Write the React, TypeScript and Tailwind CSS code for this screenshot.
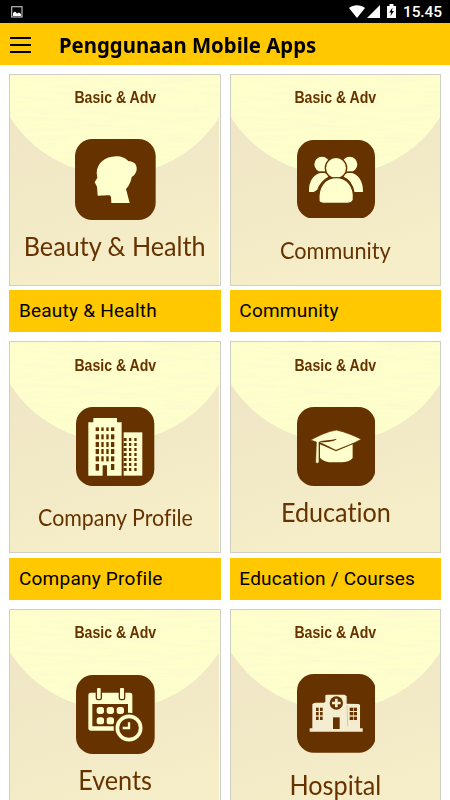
import type { ReactNode } from "react";

const CREAM = "#feffcd";
const BROWN = "#663300";

const BeautyIcon = () => (
  <svg viewBox="16 10 242 243" className="w-[80.7px] h-[81px]">
    <rect x="16" y="10" width="242" height="243" rx="52" fill={BROWN} />
    <path
      fill={CREAM}
      d="M81 112C82 82 106 63 139 62C157 62 168 68 177 77C190 77 200 84 201 96C202 109 195 118 186 124C184 138 178 151 169 160L180 202H125L124 185C123 180 120 179 115 179L84 180L82 153L75 140L83 126Z"
    />
  </svg>
);

const CommunityIcon = () => (
  <svg viewBox="681 13 234 236" className="w-[78px] h-[78.7px]">
    <rect x="681" y="13" width="234" height="236" rx="50" fill={BROWN} />
    <g fill={CREAM} stroke={BROWN} strokeWidth="4">
      <ellipse cx="756" cy="86" rx="25" ry="25" />
      <ellipse cx="839" cy="86" rx="25" ry="25" />
      <path d="M715 171C713 136 730 111 756 109C768 109 777 116 777 124C762 132 748 148 743 164L732 171Z" />
      <path d="M881 171C882 136 866 111 840 109C827 109 819 116 819 124C836 131 848 146 852 171Z" />
      <circle cx="798" cy="97" r="32" />
      <path d="M747 196C743 152 766 126 799 126C832 126 854 153 850 192C848 199 841 203 830 203H768C758 203 748 202 747 196Z" />
    </g>
  </svg>
);

const CompanyIcon = () => (
  <svg viewBox="50 36 235 237" className="w-[78.3px] h-[79px]">
    <rect x="50" y="36" width="235" height="237" rx="50" fill={BROWN} />
    <path fill={CREAM} d="M87 242V82H102V69H173V82H187V242H143V211H130V242Z" />
    <path fill={CREAM} d="M193 112H249V242H193Z" />
    <g fill={BROWN}>
      {[97, 118, 141, 162, 184].map((y, row) => (
        <g key={y}>
          {[109, 126, 141, 155].map((x) => (
            <rect key={x} x={x} y={y} width={x === 109 || x === 155 ? 10 : 7} height={row === 0 ? 11 : 15} />
          ))}
        </g>
      ))}
      <rect x="109" y="207" width="10" height="20" />
      <rect x="155" y="207" width="10" height="18" />
      {[129, 144, 159, 174, 189, 204, 219].map((y) => (
        <g key={y}>
          <rect x="193" y={y} width="9" height="9" />
          <rect x="209" y={y} width="7" height="9" />
          <rect x="225" y={y} width="7" height="9" />
        </g>
      ))}
    </g>
  </svg>
);

const EducationIcon = () => (
  <svg viewBox="50 36 235 237" className="w-[78.3px] h-[79px]">
    <rect x="50" y="36" width="235" height="237" rx="50" fill={BROWN} />
    <path fill={CREAM} d="M119 148L167 169L217 148V189C210 198 198 202 184 202H146C133 199 124 195 119 188Z" />
    <path
      fill={CREAM}
      stroke={BROWN}
      strokeWidth="2"
      d="M91 135C113 123 142 109 168 105C195 111 220 121 243 133C218 147 190 156 167 166C151 158 137 151 122 144L116 141L116 202C113 206 109 206 106 202L108 141Z"
    />
    <path d="M116 141C130 134 152 136 169 131C165 139 148 140 122 142Z" fill={BROWN} />
  </svg>
);

const EventsIcon = () => (
  <svg viewBox="50 30 236 237" className="w-[78.7px] h-[79px]">
    <rect x="50" y="30" width="236" height="237" rx="50" fill={BROWN} />
    <rect x="87" y="83" width="132" height="114" rx="7" fill={CREAM} />
    <path d="M99 117H206V184H99Z" fill={BROWN} />
    <g fill={CREAM} stroke={BROWN} strokeWidth="4">
      <rect x="111" y="67" width="15" height="37" rx="5" />
      <rect x="180" y="67" width="16" height="37" rx="5" />
    </g>
    <g fill={CREAM}>
      <rect x="112" y="126" width="22" height="21" rx="8" />
      <rect x="142" y="126" width="22" height="21" rx="8" />
      <rect x="172" y="126" width="22" height="21" rx="8" />
      <rect x="112" y="157" width="22" height="21" rx="8" />
      <rect x="142" y="157" width="22" height="21" rx="8" />
    </g>
    <circle cx="209" cy="189" r="46" fill={BROWN} />
    <circle cx="209" cy="189" r="35" fill="none" stroke={CREAM} strokeWidth="11" />
    <path d="M209 172V189H190" fill="none" stroke={CREAM} strokeWidth="7" />
  </svg>
);

const HospitalIcon = () => (
  <svg viewBox="50 28 236 236" className="w-[78.7px] h-[78.7px]">
    <rect x="50" y="28" width="236" height="236" rx="50" fill={BROWN} />
    <path
      fill="#f5edd0"
      d="M88 201V191H96V119C98 116 102 115 106 114H130L135 112V92L140 90H193L199 95V117L235 118L239 121V191H247V201Z"
    />
    <path d="M200 122L202 185" stroke="#c9b48f" strokeWidth="2" />
    <circle cx="168" cy="115" r="20" fill={BROWN} />
    <path d="M168 102V128M155 115H181" stroke="#f5edd0" strokeWidth="8" />
    <g fill={BROWN}>
      <rect x="158" y="158" width="20" height="35" />
      {[129, 142, 156].map((y) => (
        <g key={y}>
          <rect x="107" y={y} width="8" height="10" />
          <rect x="119" y={y} width="8" height="10" />
          <rect x="208" y={y} width="10" height="10" />
          <rect x="220" y={y} width="10" height="10" />
        </g>
      ))}
    </g>
  </svg>
);

interface Category {
  title: string;
  label?: string;
  icon: ReactNode;
  iconClass: string;
  titleClass: string;
}

const categories: Category[] = [
  {
    title: "Beauty & Health",
    label: "Beauty & Health",
    icon: <BeautyIcon />,
    iconClass: "mt-[30.5px] h-[92px]",
    titleClass: "text-[26.5px] scale-x-[0.95]",
  },
  {
    title: "Community",
    label: "Community",
    icon: <CommunityIcon />,
    iconClass: "mt-[31.5px] h-[96.5px]",
    titleClass: "text-[22.5px] scale-x-[0.965]",
  },
  {
    title: "Company Profile",
    label: "Company Profile",
    icon: <CompanyIcon />,
    iconClass: "mt-[31.3px] h-[96px]",
    titleClass: "text-[22.5px] scale-x-[0.95]",
  },
  {
    title: "Education",
    label: "Education / Courses",
    icon: <EducationIcon />,
    iconClass: "mt-[31.3px] h-[90px]",
    titleClass: "text-[26.5px] scale-x-[0.95]",
  },
  {
    title: "Events",
    icon: <EventsIcon />,
    iconClass: "mt-[31.7px] h-[89.5px]",
    titleClass: "text-[26px] scale-x-[0.97]",
  },
  {
    title: "Hospital",
    icon: <HospitalIcon />,
    iconClass: "mt-[31px] h-[95.5px]",
    titleClass: "text-[26px] scale-x-[0.97]",
  },
];

const StatusBar = () => (
  <div className="flex h-[23px] items-center bg-black pl-[11px] pr-[8px] text-white">
    <svg viewBox="0 0 12 12" className="mt-[1px] h-[12px] w-[12px]">
      <rect x="0.7" y="0.7" width="10.3" height="10.3" fill="none" stroke="#b8b8b8" strokeWidth="1.2" />
      <path d="M2 10V7L4 5.5L6 7.5L8 6.5L10 8V10Z" fill="#fff" />
    </svg>
    <div className="ml-auto flex items-center">
      <svg viewBox="0 0 16 13" className="h-[13px] w-[16px]">
        <path d="M0 3C4.5 -0.6 11.5 -0.6 16 3L8 13Z" fill="#fff" />
      </svg>
      <svg viewBox="0 0 13 13" className="ml-[2px] h-[13px] w-[13px]">
        <path d="M13 0V13H0Z" fill="#fff" />
      </svg>
      <svg viewBox="0 0 9 14" className="mb-[2px] ml-[7px] h-[14px] w-[9px]">
        <path d="M0 2H2.5V0H6.5V2H9V14H0Z" fill="#fff" />
        <path d="M5.6 3.5L2.2 8.5H4.2L3.4 12.2L6.9 7H4.9Z" fill="#000" />
      </svg>
      <span className="ml-[7px] mt-[2px] font-['Roboto',sans-serif] text-[15.5px] leading-none font-medium tracking-[-0.1px]">
        15.45
      </span>
    </div>
  </div>
);

const Header = () => (
  <header className="flex h-[42px] items-center bg-[#ffc800] pl-[9.5px] text-black">
    <button aria-label="Menu" className="mt-[1px] flex w-[21.5px] flex-col gap-[5px]">
      <span className="h-[2px] bg-black" />
      <span className="h-[2px] bg-black" />
      <span className="h-[2px] bg-black" />
    </button>
    <h1 className="ml-[28px] mt-[2px] origin-left scale-x-[0.968] font-['Noto_Sans',sans-serif] text-[21px] leading-none font-bold whitespace-nowrap">
      Penggunaan Mobile Apps
    </h1>
  </header>
);

const CardBackground = () => (
  <svg viewBox="0 0 210 210" preserveAspectRatio="none" className="absolute inset-0 h-full w-full">
    <defs>
      <linearGradient id="sand" x1="0" y1="0" x2="0.3" y2="1">
        <stop offset="0" stopColor="#efe5c6" />
        <stop offset="0.6" stopColor="#f2e9c7" />
        <stop offset="1" stopColor="#f5eec8" />
      </linearGradient>
      <filter id="grain" x="0" y="0" width="100%" height="100%">
        <feTurbulence type="fractalNoise" baseFrequency="0.02 0.3" numOctaves="2" seed="4" />
        <feColorMatrix values="0 0 0 0 0.93  0 0 0 0 0.91  0 0 0 0 0.66  1.4 0 0 0 -0.55" />
        <feComposite in2="SourceGraphic" operator="in" />
      </filter>
    </defs>
    <rect width="210" height="210" fill="url(#sand)" />
    <circle cx="105" cy="-24" r="124" fill="#feffcb" />
    <circle cx="105" cy="-24" r="124" fill="#fff" filter="url(#grain)" opacity="0.7" />
  </svg>
);

const CategoryCard = ({ title, label, icon, iconClass, titleClass }: Category) => (
  <div>
    <div className="relative h-[212px] overflow-hidden border border-[#cfcfc6]">
      <CardBackground />
      <div className="relative flex flex-col items-center text-[#663300]">
        <p className="mt-[13.5px] h-5 scale-x-[0.83] font-['Liberation_Sans',Arial,sans-serif] text-[17px] leading-5 font-bold whitespace-nowrap">
          Basic &amp; Adv
        </p>
        <div className={`pl-[1px] ${iconClass}`}>{icon}</div>
        <h2 className={`leading-[30px] font-['Lato',sans-serif] whitespace-nowrap [font-variant-ligatures:none] ${titleClass}`}>
          {title}
        </h2>
      </div>
    </div>
    {label && (
      <div className="mt-[4.7px] flex h-[42px] items-center bg-[#ffc800] pt-[1px] pl-[9.5px]">
        <span className="font-['Roboto',sans-serif] text-[19px] tracking-[0.24px] text-black">{label}</span>
      </div>
    )}
  </div>
);

const App = () => {
  return (
    <div className="h-[800px] w-[450px] overflow-hidden bg-white">
      <StatusBar />
      <Header />
      <main className="grid grid-cols-2 gap-x-[9.2px] gap-y-[9px] pt-[8.5px] pr-[9px] pl-[9.4px]">
        {categories.map((category) => (
          <CategoryCard key={category.title} {...category} />
        ))}
      </main>
    </div>
  );
};

export default App;
